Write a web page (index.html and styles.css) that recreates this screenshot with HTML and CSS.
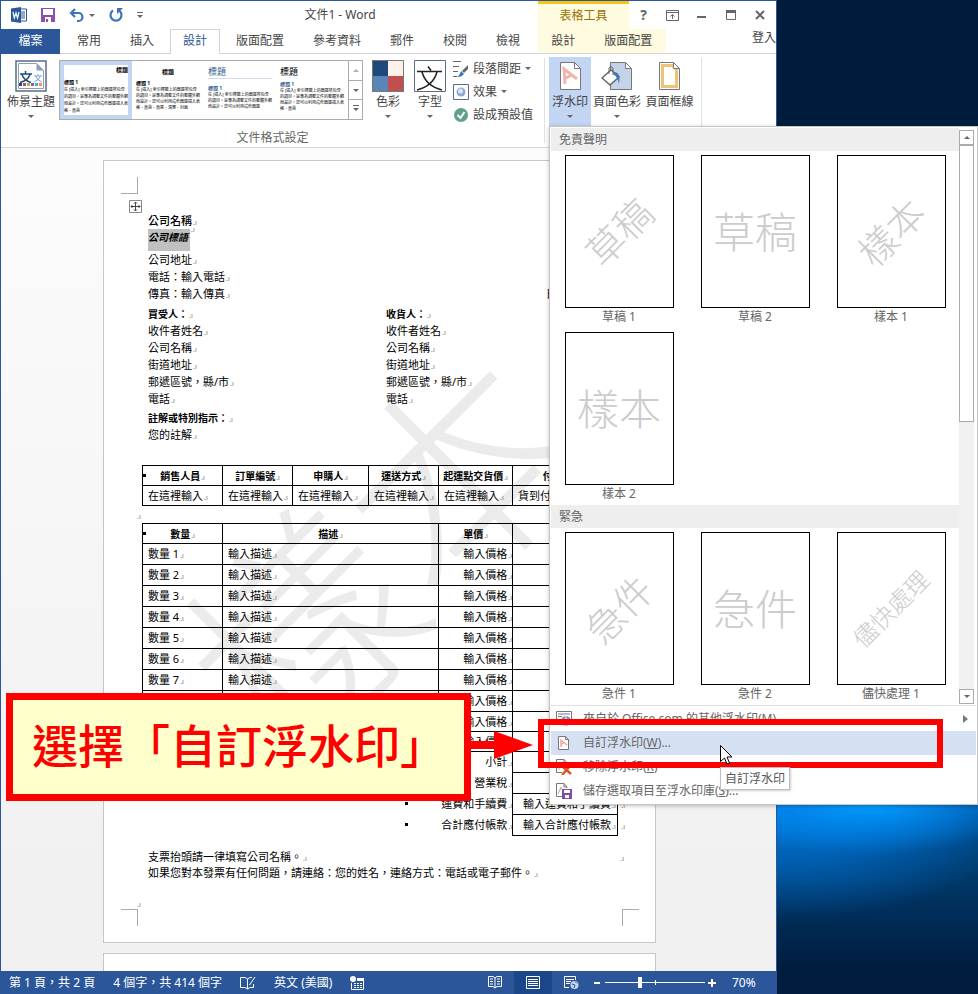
FILE: index.html
```html
<!DOCTYPE html>
<html lang="zh-Hant">
	<head>
		<meta charset="UTF-8">
		<title>文件1 - Word</title>
		<link rel="stylesheet" href="styles.css">
	</head>
	<body>
		<!-- Word 視窗 -->
		<div class="word">
			<!-- 標題列 -->
			<div class="titlebar">
				<div class="quick">
					<svg width="16" height="16" viewBox="0 0 16 16"><path d="M8 2h7.500v12H8z" fill="#fff" stroke="#2b579a"/><path d="M10 5h4M10 7h4M10 9h4M10 11h4" stroke="#2b579a"/><path d="M0 1.500L10 0v16L0 14.500z" fill="#2b579a"/><path d="M2 5l1.300 6L5 6l1.500 5L8 5" fill="none" stroke="#fff" stroke-width="1.200"/></svg>
					<button title="儲存"><svg width="14" height="14" viewBox="0 0 14 14"><path d="M0 0h14v14H0z" fill="#8a52a8"/><path d="M2 1h10v6H2zM4 9h6v5H4z" fill="#fff"/><path d="M5 11h2v3H5z" fill="#8a52a8"/></svg></button>
					<button title="復原" class="undo"><svg width="15" height="15" viewBox="0 0 15 15"><path d="M2 5h7.500a4 4 0 0 1 0 8H8M6 1L2 5l4 4" fill="none" stroke="#3d74b5" stroke-width="2.200"/></svg><i class="arrow"></i></button>
					<button title="取消復原"><svg width="14" height="14" viewBox="0 0 14 14"><path d="M4 2.500A5.500 5.500 0 1 0 10 2.500" fill="none" stroke="#3d74b5" stroke-width="2.200"/><path d="M8 0h6L8 6z" fill="#3d74b5"/></svg></button>
					<button title="自訂快速存取工具列"><svg width="6" height="7" viewBox="0 0 6 7"><path d="M0 .5h6" stroke="#666"/><path d="M0 3h6L3 6z" fill="#666"/></svg></button>
				</div>
				<div class="title">文件1 - Word</div>
				<div class="context-title">表格工具</div>
				<div class="window-buttons">
					<button title="說明" class="help">?</button>
					<button title="功能區顯示選項"><svg width="13" height="11" viewBox="0 0 13 11"><path d="M.5.5h12v10H.5zM.5 2.500h12M6.500 9V5M4.500 6.500l2-2 2 2" fill="none" stroke="#666"/></svg></button>
					<button title="最小化"><svg width="10" height="10" viewBox="0 0 10 10"><path d="M0 6h9v2H0z" fill="#666"/></svg></button>
					<button title="最大化"><svg width="10" height="10" viewBox="0 0 10 10"><path d="M.5.5h9v9h-9z" fill="none" stroke="#666"/><path d="M0 0h10v3H0z" fill="#666"/></svg></button>
					<button title="關閉"><svg width="10" height="10" viewBox="0 0 10 10"><path d="M1 1l8 8M9 1L1 9" stroke="#666" stroke-width="2"/></svg></button>
				</div>
			</div>

			<!-- 索引標籤 -->
			<div class="tabs">
				<a class="file" href="#">檔案</a>
				<a href="#">常用</a>
				<a href="#">插入</a>
				<a class="active" href="#">設計</a>
				<a href="#">版面配置</a>
				<a href="#">參考資料</a>
				<a href="#">郵件</a>
				<a href="#">校閱</a>
				<a href="#">檢視</a>
				<div class="context-tabs">
					<a href="#">設計</a>
					<a href="#">版面配置</a>
				</div>
				<a class="login" href="#">登入</a>
			</div>

			<!-- 功能區 -->
			<div class="ribbon">
				<div class="group format-group">
					<div class="group-row">
						<button class="big themes">
							<svg width="32" height="32" viewBox="0 0 32 32"><path d="M1 1h30v30H1z" fill="#fff" stroke="#5b6b85" stroke-width="1.500"/><path d="M3.500 3.500h18l7 7v18h-25z" fill="#fff" stroke="#8d9dbb"/><path d="M21.500 3v7.500H29z" fill="#8d9dbb"/><path d="M5 14h12M10.500 11v3M7 14.500q2 6 9 8M15 14.500q-2 6-10 8" fill="none" stroke="#1f4e79" stroke-width="1.500"/><path d="M19 16h8M23 14v2M20.500 16q1.500 4 6.500 6M25.500 16q-1.500 4-6.500 6" fill="none" stroke="#7aa5d8"/><path d="M4 23h3v3H4z" fill="#1f4e79"/><path d="M8 23h3v3H8z" fill="#c0504d"/><path d="M12 23h3v3h-3z" fill="#9bbb59"/><path d="M16 23h3v3h-3z" fill="#8064a2"/><path d="M20 23h3v3h-3z" fill="#4bacc6"/><path d="M24 23h3v3h-3z" fill="#f79646"/></svg>
							<span>佈景主題</span><i class="arrow"></i>
						</button>
						<div class="gallery">
							<button class="style selected">
								<b class="style-title right">標題</b>
								<b class="style-head">標題 1</b>
								<span>在 [插入] 索引標籤上的圖庫所包含的項目，是專為調整文件的整體外觀而設計，您可以利用這些圖庫插入表格、頁首</span>
							</button>
							<button class="style">
								<b class="style-title center">標題</b>
								<b class="style-head">標題 1</b>
								<span>在 [插入] 索引標籤上的圖庫所包含的項目，是專為調整文件的整體外觀而設計，您可以利用這些圖庫插入表格、頁首、頁尾、清單、封面</span>
							</button>
							<button class="style large">
								<b class="style-title blue">標題</b>
								<b class="style-head blue">標題 1</b>
								<span>在 [插入] 索引標籤上的圖庫所包含的項目，是專為調整文件的整體外觀而設計，您可以利用這些圖庫</span>
							</button>
							<button class="style large plain">
								<b class="style-title">標題</b>
								<b class="style-head blue">標題 1</b>
								<span>在 [插入] 索引標籤上的圖庫所包含的項目，是專為調整文件的整體外觀而設計，您可以利用這些圖庫插入表格、頁首</span>
							</button>
							<div class="gallery-scroll">
								<button title="上一列" disabled><i class="arrow up"></i></button>
								<button title="下一列"><i class="arrow"></i></button>
								<button title="其他"><i class="arrow more"></i></button>
							</div>
						</div>
						<button class="big colors">
							<svg width="32" height="32" viewBox="0 0 32 32"><path d="M0 0h16v16H0z" fill="#1f497d"/><path d="M16 0h16v16H16z" fill="#fdf2e9"/><path d="M0 16h16v16H0z" fill="#5b84b8"/><path d="M16 16h16v16H16z" fill="#c0504d"/><path d="M.5.5h31v31H.5z" fill="none" stroke="#777"/></svg>
							<span>色彩</span><i class="arrow"></i>
						</button>
						<button class="big">
							<svg width="32" height="32" viewBox="0 0 32 32"><path d="M.5.5h31v31H.5z" fill="#fff" stroke="#5b6b85"/><path d="M3 11.500h25M14 6.500l3 4M8 12q4 14 20 18M23 12Q19 26 3 30" fill="none" stroke="#222" stroke-width="1.500"/></svg>
							<span>字型</span><i class="arrow"></i>
						</button>
						<div class="list">
							<button>
								<svg width="16" height="16" viewBox="0 0 16 16"><path d="M0 .5h8M0 5.500h6M0 10.500h5M0 15.500h4" stroke="#666"/><path d="M15 4v4l-4 4-2-2z" fill="#666"/><path d="M8 10l3 3q-2 3-7 3 3-2 4-6z" fill="#3d74b5"/></svg>
								段落間距<i class="arrow"></i>
							</button>
							<button>
								<svg width="16" height="16" viewBox="0 0 16 16"><path d="M.5.5h15v15H.5z" fill="#fff" stroke="#5b6b85"/><circle cx="8" cy="8" r="4.500" fill="#8fa9d0"/><circle cx="7.500" cy="7" r="2.500" fill="#dbe6f5"/></svg>
								效果<i class="arrow"></i>
							</button>
							<button>
								<svg width="16" height="16" viewBox="0 0 16 16"><circle cx="8" cy="8" r="7" fill="#5fa18c"/><path d="M4.500 8l3 3 4-6" fill="none" stroke="#fff" stroke-width="2"/></svg>
								設成預設值
							</button>
						</div>
					</div>
					<div class="group-name">文件格式設定</div>
				</div>
				<div class="group page-group">
					<div class="group-row">
						<button class="big open">
							<svg width="32" height="32" viewBox="0 0 32 32"><path d="M6.500 2.500h14l6 6v21h-20z" fill="#fff" stroke="#777"/><path d="M20.500 2.500v6h6" fill="none" stroke="#777"/><path d="M11 24l-1-15 13 10M10.500 19l7-4" fill="none" stroke="#f0b5ad" stroke-width="3"/></svg>
							<span>浮水印</span><i class="arrow"></i>
						</button>
						<button class="big page-color">
							<svg width="32" height="32" viewBox="0 0 32 32"><path d="M9.500 2.500h15l6 6v21h-21z" fill="#c2d3ea" stroke="#777"/><path d="M24.500 2.500v6h6z" fill="#fff" stroke="#777"/><path d="M1 18l9-8 8 7-9 8z" fill="#fff" stroke="#666" stroke-width="1.500"/><path d="M8 14V8q2-3 4 0v7" fill="none" stroke="#666"/><path d="M14 12q6 1 4 12-1-7-6-10z" fill="#3d74b5"/></svg>
							<span>頁面色彩</span><i class="arrow"></i>
						</button>
						<button class="big page-border">
							<svg width="32" height="32" viewBox="0 0 32 32"><path d="M5.500 2.500h14l6 6v21h-20z" fill="#fff" stroke="#777"/><path d="M8.500 5.500h10l4 4v17h-14z" fill="none" stroke="#eec277" stroke-width="3"/><path d="M19.500 2.500v6h6z" fill="#fff" stroke="#777"/></svg>
							<span>頁面框線</span>
						</button>
					</div>
				</div>
			</div>

			<!-- 文件 -->
			<div class="workspace">
				<div class="page">
					<div class="watermark">樣本</div>
					<i class="crop top-left"></i>
					<i class="crop bottom-left"></i>
					<i class="crop bottom-right"></i>
					<svg class="move" width="13" height="13" viewBox="0 0 13 13"><path d="M.5.5h12v12H.5z" fill="#fff" stroke="#888"/><path d="M6.500 2v9M2 6.500h9M5 3.500l1.500-1.500L8 3.500M5 9.500L6.500 11 8 9.500M3.500 5L2 6.500 3.500 8M9.500 5L11 6.500 9.500 8" fill="none" stroke="#444"/></svg>

					<div class="company">
						<p class="name mark">公司名稱</p>
						<p class="slogan mark"><span>公司標語</span></p>
						<p class="mark">公司地址</p>
						<p class="mark">電話：輸入電話</p>
						<div class="fax"><p class="mark">傳真：輸入傳真</p><p class="date">日期</p></div>
					</div>
					<div class="parties">
						<div>
							<h4 class="mark">買受人：</h4>
							<p class="mark">收件者姓名</p>
							<p class="mark">公司名稱</p>
							<p class="mark">街道地址</p>
							<p class="mark">郵遞區號，縣/市</p>
							<p class="mark">電話</p>
						</div>
						<div>
							<h4 class="mark">收貨人：</h4>
							<p class="mark">收件者姓名</p>
							<p class="mark">公司名稱</p>
							<p class="mark">街道地址</p>
							<p class="mark">郵遞區號，縣/市</p>
							<p class="mark">電話</p>
						</div>
					</div>
					<div class="notes">
						<h4 class="mark">註解或特別指示：</h4>
						<p class="mark">您的註解</p>
					</div>

					<table class="sales">
						<colgroup><col class="w80"><col class="w70"><col class="w76"><col class="w70"><col class="w74"><col></colgroup>
						<tr>
							<th class="cell-mark"><span class="mark">銷售人員</span></th>
							<th><span class="mark">訂單編號</span></th>
							<th><span class="mark">申購人</span></th>
							<th><span class="mark">運送方式</span></th>
							<th><span class="mark">起運點交貨價</span></th>
							<th><span class="mark">付款條件</span></th>
						</tr>
						<tr>
							<td><span class="mark">在這裡輸入</span></td>
							<td><span class="mark">在這裡輸入</span></td>
							<td><span class="mark">在這裡輸入</span></td>
							<td><span class="mark">在這裡輸入</span></td>
							<td><span class="mark">在這裡輸入</span></td>
							<td><span class="mark">貨到付款</span></td>
						</tr>
					</table>
					<p class="mark between"></p>

					<table class="items">
						<colgroup><col class="w80"><col class="w216"><col class="w74"><col></colgroup>
						<tr>
							<th class="cell-mark"><span class="mark">數量</span></th>
							<th><span class="mark">描述</span></th>
							<th><span class="mark">單價</span></th>
							<th></th>
						</tr>
						<tr><td><span class="mark">數量 1</span></td><td><span class="mark">輸入描述</span></td><td><span class="mark">輸入價格</span></td><td></td></tr>
						<tr><td><span class="mark">數量 2</span></td><td><span class="mark">輸入描述</span></td><td><span class="mark">輸入價格</span></td><td></td></tr>
						<tr><td><span class="mark">數量 3</span></td><td><span class="mark">輸入描述</span></td><td><span class="mark">輸入價格</span></td><td></td></tr>
						<tr><td><span class="mark">數量 4</span></td><td><span class="mark">輸入描述</span></td><td><span class="mark">輸入價格</span></td><td></td></tr>
						<tr><td><span class="mark">數量 5</span></td><td><span class="mark">輸入描述</span></td><td><span class="mark">輸入價格</span></td><td></td></tr>
						<tr><td><span class="mark">數量 6</span></td><td><span class="mark">輸入描述</span></td><td><span class="mark">輸入價格</span></td><td></td></tr>
						<tr><td><span class="mark">數量 7</span></td><td><span class="mark">輸入描述</span></td><td><span class="mark">輸入價格</span></td><td></td></tr>
						<tr><td></td><td></td><td><span class="mark">輸入價格</span></td><td></td></tr>
						<tr class="short"><td></td><td></td><td><span class="mark">輸入價格</span></td><td></td></tr>
						<tr class="short"><td></td><td></td><td><span class="mark">輸入價格</span></td><td></td></tr>
						<tr class="sum"><td colspan="3"><span class="mark">小計</span></td><td></td></tr>
						<tr class="sum"><td colspan="3"><span class="mark">營業稅</span></td><td></td></tr>
						<tr class="sum"><td colspan="3"><i class="bullet"></i><span class="mark sum-name">運費和手續費</span></td><td class="row-end"><span class="mark">輸入運費和手續費</span></td></tr>
						<tr class="sum"><td colspan="3"><i class="bullet"></i><span class="mark sum-name">合計應付帳款</span></td><td class="row-end"><span class="mark">輸入合計應付帳款</span></td></tr>
					</table>
					<div class="footer-text">
						<div class="check"><p class="mark">支票抬頭請一律填寫公司名稱。</p><p class="mark"></p></div>
						<p class="mark">如果您對本發票有任何問題，請連絡：您的姓名，連絡方式：電話或電子郵件。</p>
						<p class="mark last"></p>
					</div>
				</div>
				<div class="page next"></div>
			</div>

			<!-- 狀態列 -->
			<div class="status">
				<span>第 1 頁，共 2 頁</span>
				<span>4 個字，共 414 個字</span>
				<svg width="16" height="14" viewBox="0 0 16 14"><path d="M7.500 3L5 1.500H.5v10H5L7.500 13 10 11.500h3.500V8M7.500 3v10M7.500 3L10 1.500h2M15 1L9.500 9" fill="none" stroke="#fff"/></svg>
				<span>英文 (美國)</span>
				<svg class="macro" width="14" height="14" viewBox="0 0 14 14"><circle cx="3" cy="3" r="3" fill="#fff"/><path d="M7 2.500h6.500v11h-12V7" fill="none" stroke="#fff"/><path d="M7 2h7v3H7z" fill="#fff"/><path d="M4 7.500h8M4 9.500h8M4 11.500h8" stroke="#fff" stroke-dasharray="2 1"/></svg>
				<div class="views">
					<button title="閱讀模式"><svg width="14" height="13" viewBox="0 0 14 13"><path d="M7 2L5 .5H.5v10H5L7 12l2-1.500h4.500V.5H9L7 2v10M2 3h3M2 5.500h3M2 8h3M9 3h3M9 5.500h3M9 8h3" fill="none" stroke="#fff"/></svg></button>
					<button title="整頁模式" class="current"><svg width="14" height="13" viewBox="0 0 14 13"><path d="M.5.5h13v12H.5zM2 3.500h10M2 5.500h10M2 7.500h10M2 9.500h10" fill="none" stroke="#fff"/></svg></button>
					<button title="Web 版面配置"><svg width="15" height="13" viewBox="0 0 15 13"><path d="M5 11.500H.5V.5h11V4M2 3.500h8M2 5.500h5M2 7.500h4" fill="none" stroke="#fff"/><circle cx="10.500" cy="9" r="4" fill="#c9d6ea"/><path d="M8 8l3 1-1 3M11 5.500l2 2" fill="none" stroke="#2b579a"/></svg></button>
				</div>
				<button class="zoom-button" title="縮小"><svg width="8" height="8" viewBox="0 0 8 8"><path d="M1 3h6v2H1z" fill="#fff"/></svg></button>
				<input class="zoom" type="range" min="0" max="100" value="34" aria-label="顯示比例">
				<button class="zoom-button" title="放大"><svg width="8" height="8" viewBox="0 0 8 8"><path d="M0 3h8v2H0zM3 0h2v8H3z" fill="#fff"/></svg></button>
				<span class="percent">70%</span>
			</div>
		</div>

		<!-- 浮水印功能表 -->
		<div class="menu">
			<div class="menu-top">
				<div class="menu-list">
					<h3>免責聲明</h3>
					<div class="thumbs">
						<button><span class="thumb"><em class="slant">草稿</em></span>草稿 1</button>
						<button><span class="thumb"><em>草稿</em></span>草稿 2</button>
						<button><span class="thumb"><em class="slant">樣本</em></span>樣本 1</button>
						<button><span class="thumb"><em>樣本</em></span>樣本 2</button>
					</div>
					<h3>緊急</h3>
					<div class="thumbs">
						<button><span class="thumb"><em class="slant">急件</em></span>急件 1</button>
						<button><span class="thumb"><em>急件</em></span>急件 2</button>
						<button><span class="thumb"><em class="slant long">儘快處理</em></span>儘快處理 1</button>
					</div>
				</div>
				<div class="scrollbar">
					<button title="向上"><i class="arrow up"></i></button>
					<div class="scroll-thumb"></div>
					<button title="向下"><i class="arrow"></i></button>
				</div>
			</div>
			<div class="commands">
				<button>
					<svg width="16" height="16" viewBox="0 0 16 16"><path d="M.5.5h15v12H.5z" fill="#fff" stroke="#777"/><path d="M2 3h12M2 5.500h4" stroke="#777"/><circle cx="10" cy="10" r="5" fill="#6d95cc"/><path d="M6 9q4 2 8 0M10 5v10" fill="none" stroke="#fff"/></svg>
					<span>來自於 Office.com 的其他浮水印(<u>M</u>)</span><i class="arrow side"></i>
				</button>
				<button class="hover">
					<svg width="16" height="16" viewBox="0 0 16 16"><path d="M2.500 1.500h7l3 3v10h-10z" fill="#fff" stroke="#777"/><path d="M9.500 1.500v3h3" fill="none" stroke="#777"/><path d="M5 12V5l6 5M5 9.500l3-2" fill="none" stroke="#eca79c" stroke-width="1.500"/></svg>
					<span>自訂浮水印(<u>W</u>)...</span>
				</button>
				<button>
					<svg width="16" height="16" viewBox="0 0 16 16"><path d="M11 6V4L8 .5H.5v13H6M8 .5V4h3" fill="none" stroke="#777"/><path d="M3 11V4l3 3" fill="none" stroke="#aaa"/><path d="M6 7l9 8M15 6l-9 10" stroke="#d9532c" stroke-width="2.500"/></svg>
					<span>移除浮水印(<u>R</u>)</span>
				</button>
				<button>
					<svg width="16" height="16" viewBox="0 0 16 16"><path d="M11 5V4L8 .5H.5v13H6M8 .5V4h3" fill="none" stroke="#777"/><path d="M2 11l3-7v3" fill="none" stroke="#aaa"/><path d="M6 6h10v10H6z" fill="#7f4ea0"/><path d="M8 7h6v3H8zM9 12h4v3H9z" fill="#fff"/></svg>
					<span>儲存選取項目至浮水印庫(<u>S</u>)...</span>
				</button>
			</div>
		</div>

		<!-- 說明標註 -->
		<div class="highlight"></div>
		<svg class="callout-arrow" width="68" height="28" viewBox="0 0 68 28"><path d="M0 10h29V0l39 14-39 14V18H0z" fill="#f00"/></svg>
		<div class="callout">選擇「自訂浮水印」</div>
		<svg class="pointer" width="13" height="20" viewBox="0 0 13 20"><path d="M.5.5v16l4-3.500 2.500 6 2.500-1-2.500-6h5z" fill="#fff" stroke="#000"/></svg>
		<div class="tooltip">自訂浮水印</div>
	</body>
</html>
```

FILE: styles.css
```css
*{
	margin: 0;
	padding: 0;
	box-sizing: border-box;
}

body{
	height: 100vh;
	overflow: hidden;
	position: relative;
	font: 12px/16px "Noto Sans", "Noto Sans CJK TC", sans-serif;
	color: #444;
	/*桌面背景*/
	background:
		radial-gradient(ellipse 160px 50px at 870px 804px, #009cff 0%, rgba(0,140,245,.6) 50%, transparent 100%),
		radial-gradient(ellipse 240px 120px at 790px 800px, #0080e6 0%, rgba(0,110,205,.7) 50%, transparent 100%),
		linear-gradient(to bottom, #001c3d 0, #001c3d 130px, #004a88 800px, #003868 880px, #001c3f 970px);
}

button{
	font: inherit;
	color: inherit;
	border: 0;
	background: none;
}

a{
	color: inherit;
	text-decoration: none;
}

svg{
	display: block;
	flex: none;
}

/*小三角形*/
.arrow{
	display: block;
	width: 0;
	flex: none;
	border: 3px solid transparent;
	border-top-color: #666;
	border-bottom: 0;
}

.arrow.up{
	border-top: 0;
	border-bottom: 3px solid #666;
}

.arrow.side{
	border: 4px solid transparent;
	border-left: 5px solid #777;
	border-right: 0;
}

.arrow.more{
	position: relative;
}

.arrow.more::before{
	content: "";
	position: absolute;
	left: -3px;
	top: -6px;
	width: 6px;
	height: 1px;
	background-color: #666;
}

/*Word 視窗*/
.word{
	height: 100%;
	margin-right: 201px;
	display: flex;
	flex-direction: column;
	border: 1px solid #2b579a;
	border-bottom: 0;
	background-color: #fff;
}

/*標題列*/
.titlebar{
	display: flex;
	height: 28px;
	flex: none;
}

.quick{
	display: flex;
	align-items: center;
	gap: 14px;
	width: 141px;
	padding-left: 10px;
}

.quick .undo{
	display: flex;
	align-items: center;
	gap: 5px;
}

.title{
	flex: 1;
	text-align: center;
	line-height: 28px;
}

.context-title{
	width: 91px;
	border-top: 3px solid #f5c518;
	background-color: #fffbe0;
	color: #987000;
	text-align: center;
	line-height: 24px;
}

.window-buttons{
	display: flex;
	width: 147px;
}

.window-buttons button{
	width: 29px;
	display: flex;
	align-items: center;
	justify-content: center;
}

.window-buttons .help{
	font-size: 14px;
	font-weight: bold;
	color: #666;
}

/*索引標籤*/
.tabs{
	display: flex;
	gap: 5px;
	height: 25px;
	flex: none;
	line-height: 23px;
	box-shadow: inset 0 -1px #d4d4d4;
}

.tabs a{
	padding: 0 12px;
}

.tabs .file{
	width: 59px;
	padding: 0;
	text-align: center;
	background-color: #2b579a;
	color: #fff;
}

.tabs .active{
	border: 1px solid #d4d4d4;
	border-bottom: 0;
	background-color: #fff;
	color: #2b579a;
	line-height: 22px;
	margin: 0 -1px;
}

.context-tabs{
	display: flex;
	gap: 5px;
	padding: 0 2px 0 1px;
	margin-left: 1px;
	height: 24px;
	background-color: #fffbe0;
}

.tabs .login{
	margin-left: auto;
	padding: 0;
	line-height: 18px;
}

/*功能區*/
.ribbon{
	display: flex;
	height: 94px;
	flex: none;
	border-bottom: 1px solid #d4d4d4;
}

.group{
	padding: 3px 4px 0 4px;
	position: relative;
}

.group::after{
	content: "";
	position: absolute;
	right: 0;
	top: 4px;
	height: 85px;
	border-right: 1px solid #e0e0e0;
}

.format-group{
	width: 544px;
	padding-left: 3px;
}

.page-group{
	padding-right: 6px;
}

.group-row{
	display: flex;
	height: 70px;
}

.group-name{
	text-align: center;
	line-height: 22px;
	color: #666;
}

.big{
	width: 42px;
	padding-top: 3px;
	display: flex;
	flex-direction: column;
	align-items: center;
	white-space: nowrap;
}

.big span{
	line-height: 19px;
}

.big .arrow{
	margin-top: 4px;
}

.themes{
	width: 54px;
	margin-right: 1px;
}

.page-color{
	width: 52px;
}

.page-border{
	width: 53px;
}

.big.open{
	background-color: #c2d5f2;
}

.gallery{
	display: flex;
	height: 60px;
	margin: 3px 4px 0 0;
	border: 1px solid #ababab;
}

.style{
	width: 72px;
	height: 58px;
	padding: 4px 4px 0;
	overflow: hidden;
	text-align: left;
	font-size: 4px;
	line-height: 6px;
	color: #000;
	display: flex;
	flex-direction: column;
	justify-content: flex-start;
}

.style.selected{
	border: 4px solid #c2d5f2;
	padding: 0;
	line-height: 7px;
}

.style-title{
	font-size: 6px;
	line-height: 11px;
	margin-bottom: 3px;
}

.style-title.right{
	text-align: right;
}

.style-title.center{
	text-align: center;
	line-height: 15px;
	margin-bottom: 0;
}

.style-head{
	font-size: 5px;
	line-height: 7px;
}

.style .blue{
	color: #365f91;
}

.large .style-title{
	font-size: 9px;
	font-weight: normal;
	line-height: 13px;
	border-bottom: 1px solid #d0dcec;
	margin-bottom: 6px;
}

.large.plain .style-title{
	border-bottom: 0;
	margin-bottom: 3px;
}

.gallery-scroll{
	width: 14px;
	display: flex;
	flex-direction: column;
	border-left: 1px solid #ababab;
}

.gallery-scroll button{
	flex: 1;
	display: flex;
	align-items: center;
	justify-content: center;
	border-top: 1px solid #ababab;
}

.gallery-scroll button:first-child{
	border-top: 0;
	opacity: .5;
}

.list{
	padding-left: 2px;
}

.list button{
	display: flex;
	align-items: center;
	gap: 4px;
	height: 23px;
	white-space: nowrap;
}

/*文件區*/
.workspace{
	flex: 1;
	min-height: 0;
	overflow: hidden;
	padding: 12px 18px 0 0;
	background-color: #f1f1f1;
	background-image: linear-gradient(to bottom, #fcfcfc 0, #f1f1f1 700px);
}

.page{
	position: relative;
	width: 553px;
	min-height: 783px;
	margin: 0 auto 10px;
	padding: 52px 37px 0 44px;
	border: 1px solid #c6c6c6;
	background-color: #fff;
	font-size: 11px;
	line-height: 17px;
	color: #000;
	overflow: hidden;
}

/*段落標記*/
.mark::after{
	content: ".ı";
	font-size: 7px;
	font-weight: normal;
	font-style: normal;
	color: #777;
	padding-left: 1px;
	line-height: 1px;
}

.watermark{
	position: absolute;
	left: 50%;
	top: 50%;
	width: 460px;
	height: 230px;
	margin: -115px 0 0 -230px;
	transform: rotate(-45deg);
	font-size: 220px;
	line-height: 230px;
	font-weight: 200;
	text-align: center;
	color: #ebebeb;
	white-space: nowrap;
}

.company, .parties, .notes, .page table, .footer-text{
	position: relative;
}

.crop{
	position: absolute;
	width: 17px;
	height: 17px;
	border: 0 solid #aaa;
}

.top-left{
	left: 17px;
	top: 16px;
	border-width: 0 1px 1px 0;
}

.bottom-left{
	left: 17px;
	bottom: 16px;
	border-width: 1px 1px 0 0;
}

.bottom-right{
	right: 16px;
	bottom: 16px;
	border-width: 1px 0 0 1px;
}

.move{
	position: absolute;
	left: 25px;
	top: 39px;
}

.name{
	font-weight: 500;
	line-height: 16px;
}

.slogan{
	height: 22px;
	font-size: 10px;
	font-weight: bold;
	font-style: italic;
	line-height: 16px;
	display: flex;
}

.slogan span{
	width: 42px;
	background-color: #c0c0c0;
}

.fax{
	display: flex;
	justify-content: space-between;
}

.date{
	width: 72px;
}

.parties{
	display: grid;
	grid-template-columns: 238px 1fr;
	margin-top: 5px;
}

.page h4{
	font-size: 10px;
	line-height: 15px;
}

.notes{
	margin-top: 4px;
}

.page table{
	width: 476px;
	margin-left: -6px;
	table-layout: fixed;
	border-collapse: collapse;
	white-space: nowrap;
}

.sales{
	margin-top: 22px;
}

.page th, .page td{
	border: 1px solid #000;
	height: 21px;
	line-height: 16px;
	padding-left: 5px;
	position: relative;
}

.page th, .sales td, .items .short td{
	height: 20px;
}

.page th{
	font-size: 10px;
	padding-left: 0;
}

.w80{
	width: 80px;
}

.w70{
	width: 70px;
}

.w74{
	width: 74px;
}

.w76{
	width: 76px;
}

.w216{
	width: 216px;
}

.cell-mark::before{
	content: "";
	position: absolute;
	left: 0;
	top: 8px;
	width: 3px;
	height: 3px;
	background-color: #000;
}

.between{
	margin-left: -12px;
}

.items td:nth-child(3){
	text-align: right;
}

.items .sum td:first-child{
	border: 0;
	text-align: right;
}

.items .row-end{
	padding-left: 10px;
}

.row-end::after{
	content: ".ı";
	position: absolute;
	right: -8px;
	top: 4px;
	font-size: 7px;
	color: #777;
}

.bullet{
	display: inline-block;
	width: 3px;
	height: 3px;
	margin-bottom: 3px;
	background-color: #000;
}

.sum-name{
	display: inline-block;
	width: 104px;
}

.footer-text{
	margin-top: 13px;
	line-height: 16px;
}

.check{
	display: flex;
	justify-content: space-between;
	margin-right: -6px;
}

.last{
	margin: 14px 0 0 -12px;
}

/*狀態列*/
.status{
	display: flex;
	align-items: center;
	height: 23px;
	flex: none;
	padding-left: 8px;
	gap: 18px;
	background-color: #2b579a;
	color: #fff;
	white-space: nowrap;
}

.views{
	display: flex;
	height: 100%;
	margin-left: auto;
}

.views button{
	width: 38px;
	display: flex;
	align-items: center;
	justify-content: center;
}

.views .current{
	background-color: #19478a;
}

.zoom-button{
	margin: 0 -15px;
}

.zoom-button + .zoom{
	margin-left: 1px;
}

.zoom{
	width: 100px;
	height: 12px;
	appearance: none;
	background: linear-gradient(#fff, #fff) center / 100% 1px no-repeat, linear-gradient(#fff, #fff) center / 1px 5px no-repeat;
}

.zoom::-webkit-slider-thumb{
	appearance: none;
	width: 4px;
	height: 11px;
	background-color: #fff;
}

.percent{
	width: 44px;
	margin-left: 13px;
}

/*浮水印功能表*/
.menu{
	position: absolute;
	left: 549px;
	right: 0;
	top: 126px;
	padding: 1px;
	border: 1px solid #c6c6c6;
	background-color: #fff;
	box-shadow: 0 1px 4px rgba(0,0,0,.25);
	color: #666;
}

.menu-top{
	display: flex;
	height: 578px;
	padding-right: 2px;
	border-bottom: 1px solid #e1e1e1;
}

.menu-list{
	width: 408px;
	height: 576px;
	overflow: hidden;
}

.menu h3{
	height: 23px;
	padding-left: 8px;
	font-size: 12px;
	font-weight: normal;
	line-height: 23px;
	background-color: #eee;
}

.thumbs{
	display: grid;
	grid-template-columns: repeat(3, 1fr);
}

.thumbs button{
	height: 177px;
	padding-top: 4px;
	display: flex;
	flex-direction: column;
	align-items: center;
	line-height: 18px;
}

.thumb{
	width: 109px;
	height: 153px;
	flex: none;
	display: flex;
	align-items: center;
	justify-content: center;
	border: 1px solid #000;
}

.thumb em{
	font-size: 42px;
	line-height: 42px;
	font-style: normal;
	font-weight: 200;
	color: #ccc;
	white-space: nowrap;
}

.thumb .slant{
	font-size: 38px;
	transform: rotate(-45deg);
}

.thumb .long{
	font-size: 24px;
}

.scrollbar{
	width: 15px;
	margin: 2px 0 1px auto;
	display: flex;
	flex-direction: column;
	background-color: #f1f1f1;
}

.scrollbar button{
	height: 15px;
	display: flex;
	align-items: center;
	justify-content: center;
	border: 1px solid #ababab;
	background-color: #fff;
}

.scroll-thumb{
	height: 277px;
	margin-bottom: auto;
	border: 1px solid #ababab;
	background-color: #fff;
}

.commands{
	padding-top: 1px;
}

.commands button{
	width: 100%;
	height: 24px;
	padding: 0 8px 0 5px;
	display: flex;
	align-items: center;
	gap: 11px;
	text-align: left;
}

.commands span{
	flex: 1;
}

.commands .hover{
	background-color: #d5e1f2;
}

/*說明標註*/
.callout{
	position: absolute;
	left: 6px;
	top: 693px;
	width: 465px;
	height: 108px;
	padding-left: 19px;
	border: 7px solid #f00;
	background-color: #ffc;
	color: #f00;
	font-size: 46px;
	font-weight: 500;
	line-height: 90px;
	white-space: nowrap;
}

.highlight{
	position: absolute;
	left: 538px;
	top: 719px;
	width: 405px;
	height: 49px;
	border: 6px solid #f00;
}

.callout-arrow{
	position: absolute;
	left: 465px;
	top: 731px;
}

.pointer{
	position: absolute;
	left: 720px;
	top: 745px;
}

.tooltip{
	position: absolute;
	left: 720px;
	top: 767px;
	padding: 2px 4px;
	border: 1px solid #bebebe;
	background-color: #fff;
	box-shadow: 1px 1px 2px rgba(0,0,0,.2);
	line-height: 17px;
	color: #575757;
}
```
